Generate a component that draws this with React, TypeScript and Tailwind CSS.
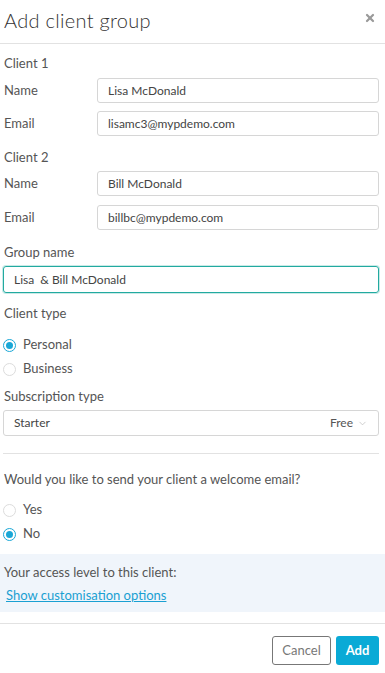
import { X, ChevronDown } from "lucide-react"

const font = { fontFamily: "Lato, 'Noto Sans', sans-serif" }

const Field = ({ label, value }: { label: string; value: string }) => (
    <div className="flex items-center h-[25px]">
        <span className="w-[97px] pl-[4px] text-[13px] text-[#555]">{label}</span>
        <div className="flex-1 h-[25px] flex items-center px-[10px] border border-[#d6d6d6] rounded-[3px] text-[12px] text-[#444]">
            {value}
        </div>
    </div>
)

const Radio = ({ label, checked }: { label: string; checked?: boolean }) => (
    <div className="flex items-center h-[24px] gap-[7px] pl-[3px]">
        <span
            className={
                checked
                    ? "w-[13px] h-[13px] rounded-full border border-[#1aa7d6] flex items-center justify-center"
                    : "w-[13px] h-[13px] rounded-full border border-[#dcdcdc]"
            }
        >
            {checked && <span className="w-[7px] h-[7px] rounded-full bg-[#1aa7d6]" />}
        </span>
        <span className="text-[13px] text-[#555]">{label}</span>
    </div>
)

const App = () => {
    return (
        <div className="w-[385px] h-[673px] bg-white overflow-hidden" style={font}>
            <header className="h-[44px] flex items-center justify-between border-b border-[#e2e2e2] pl-[4px] pr-[9px]">
                <h1 className="text-[20px] font-light text-[#333] pb-[4px] tracking-[0.3px]">Add client group</h1>
                <X className="size-[12px] text-[#9a9a9a] mb-[7px]" strokeWidth={4.5} />
            </header>

            <div className="pr-[6px]">
                <p className="pl-[4px] pt-[10px] h-[34px] text-[13px] text-[#555]">Client 1</p>
                <div className="flex flex-col gap-[8px]">
                    <Field label="Name" value="Lisa McDonald" />
                    <Field label="Email" value="lisamc3@mypdemo.com" />
                </div>

                <p className="pl-[4px] pt-[12px] h-[35px] text-[13px] text-[#555]">Client 2</p>
                <div className="flex flex-col gap-[9px]">
                    <Field label="Name" value="Bill McDonald" />
                    <Field label="Email" value="billbc@mypdemo.com" />
                </div>

                <p className="pl-[4px] pt-[13px] h-[36px] text-[13px] text-[#555]">Group name</p>
                <div className="ml-[3px] h-[27px] flex items-center px-[10px] border border-[#22aaa0] rounded-[3px] shadow-[0_0_0_1px_rgba(34,170,160,0.25)] text-[12px] text-[#444]">
                    Lisa&nbsp; &amp; Bill McDonald
                </div>

                <p className="pl-[4px] pt-[11px] h-[40px] text-[13px] text-[#555]">Client type</p>
                <Radio label="Personal" checked />
                <Radio label="Business" />

                <p className="pl-[4px] pt-[6px] h-[29px] text-[13px] text-[#555]">Subscription type</p>
                <div className="ml-[3px] h-[26px] flex items-center justify-between px-[10px] border border-[#d6d6d6] rounded-[3px] text-[12px] text-[#444]">
                    <span>Starter</span>
                    <span className="flex items-center gap-[4px] text-[#555]">
                        Free
                        <ChevronDown className="size-[11px] text-[#bbb]" strokeWidth={1.5} />
                    </span>
                </div>

                <div className="ml-[3px] mt-[17px] border-t border-[#e2e2e2]" />

                <p className="pl-[4px] pt-[16px] h-[44px] text-[13px] text-[#555]">
                    Would you like to send your client a welcome email?
                </p>
                <Radio label="Yes" />
                <Radio label="No" checked />
            </div>

            <div className="mt-[8px] h-[58px] bg-[#f0f5fb] pl-[4px] pt-[9px]">
                <p className="text-[13px] text-[#555]">Your access level to this client:</p>
                <a className="block mt-[3px] ml-[2px] text-[13px] text-[#1aa0d2] underline">
                    Show customisation options
                </a>
            </div>

            <div className="mt-[11px] border-t border-[#e2e2e2]" />

            <div className="flex justify-end gap-[5px] pr-[6px] pt-[12px]">
                <button className="h-[29px] w-[59px] border border-[#777] rounded-[3px] text-[13px] text-[#777]">
                    Cancel
                </button>
                <button className="h-[29px] w-[43px] rounded-[3px] bg-[#0aaad6] text-[13px] font-bold text-white">
                    Add
                </button>
            </div>
        </div>
    )
}

export default App
